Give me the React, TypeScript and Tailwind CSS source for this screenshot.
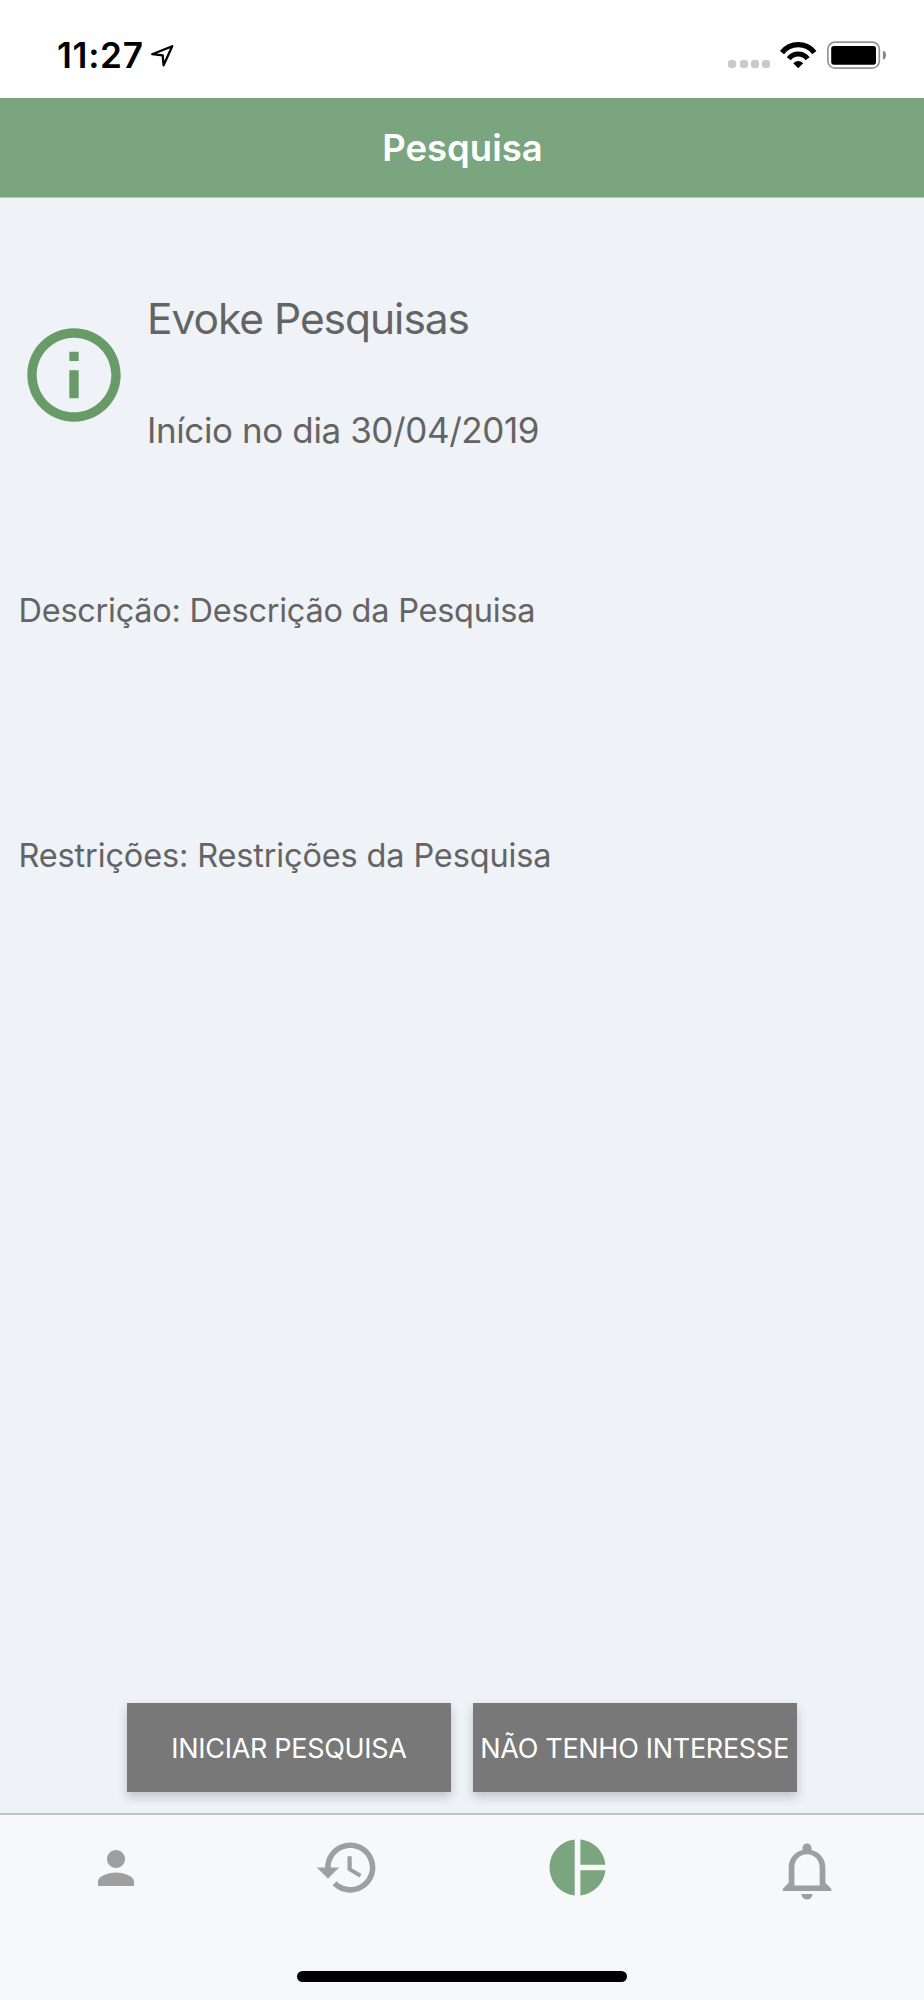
import React from "react";

function LocationArrow() {
  return (
    <svg className="ml-[6px] mt-[43px] h-[26px] w-[25px]" viewBox="0 0 25 26" fill="none">
      <path d="M2.2 11.2 22.2 3.2 13.6 22.3 12.7 12.3Z" stroke="#000" strokeWidth="2.3" strokeLinejoin="round" />
    </svg>
  );
}

function Wifi() {
  return (
    <svg className="h-[28px] w-[38px]" viewBox="779 41 38 28" fill="none">
      <path d="M782 52.6A20.6 20.6 0 0 1 814.4 52.6" stroke="#000" strokeWidth="5.2" />
      <path d="M788.8 58.7A11.6 11.6 0 0 1 807.6 58.7" stroke="#000" strokeWidth="5" />
      <path d="M793.2 63.2Q798.2 59 803.2 63.2L798.2 68.2Z" fill="#000" />
    </svg>
  );
}

function Battery() {
  return (
    <svg className="h-[28px] w-[60px]" viewBox="827 41 60 28" fill="none">
      <rect x="827.9" y="42.1" width="51.4" height="26" rx="7.2" stroke="#949494" strokeWidth="1.7" />
      <rect x="831.2" y="46" width="44.8" height="18.7" rx="2.6" fill="#000" />
      <path d="M882.9 50.6Q886 51.8 886 55.1 886 58.5 882.9 59.8Z" fill="#858585" />
    </svg>
  );
}

function StatusBar() {
  return (
    <div className="flex h-[98px] bg-white pl-[57px] text-black">
      <span className="mt-[35px] w-[87px] whitespace-nowrap text-[35.2px] font-semibold leading-[41px] tracking-[0.7px]">11:27</span>
      <LocationArrow />
      <div className="ml-auto mr-[37px] mt-[41px] flex h-[28px] gap-[10px]">
        <div className="-mr-[1px] mt-[19px] flex gap-[3.2px]">
          <i className="h-[8px] w-[8px] rounded-[3px] bg-[#c9c9c9]" />
          <i className="h-[8px] w-[8px] rounded-[3px] bg-[#c9c9c9]" />
          <i className="h-[8px] w-[8px] rounded-[3px] bg-[#c9c9c9]" />
          <i className="h-[8px] w-[8px] rounded-[3px] bg-[#c9c9c9]" />
        </div>
        <Wifi />
        <Battery />
      </div>
    </div>
  );
}

function InfoIcon() {
  return (
    <svg className="ml-[17.7px] mt-[121px] h-[112px] w-[112px] shrink-0" viewBox="0 0 24 24" fill="#689b68">
      <path d="M11 7h2v2h-2zm0 4h2v6h-2zm1-9C6.48 2 2 6.48 2 12s4.48 10 10 10 10-4.48 10-10S17.52 2 12 2zm0 18c-4.41 0-8-3.59-8-8s3.59-8 8-8 8 3.59 8 8-3.59 8-8 8z" />
    </svg>
  );
}

function TabBar() {
  return (
    <nav className="flex h-[187px] flex-col border-t-2 border-[#c0c3c8] bg-[#f6f8fa]">
      <div className="flex h-[156px]">
        <button className="flex w-1/4 items-start justify-center pt-[26px]">
          <svg className="h-[54px] w-[54px]" viewBox="0 0 24 24" fill="#9f9f9f">
            <path d="M12 12c2.21 0 4-1.79 4-4s-1.79-4-4-4-4 1.79-4 4 1.79 4 4 4zm0 2c-2.67 0-8 1.34-8 4v2h16v-2c0-2.66-5.33-4-8-4z" />
          </svg>
        </button>
        <button className="flex w-1/4 items-start justify-center pl-[2px] pt-[19px]">
          <svg className="h-[67px] w-[67px]" viewBox="0 0 24 24" fill="#9f9f9f">
            <path d="M13 3c-4.97 0-9 4.03-9 9H1l3.89 3.89.07.14L9 12H6c0-3.87 3.13-7 7-7s7 3.13 7 7-3.13 7-7 7c-1.93 0-3.68-.79-4.94-2.06l-1.42 1.42C8.27 19.99 10.51 21 13 21c4.97 0 9-4.03 9-9s-4.03-9-9-9zm-1 5v5l4.28 2.54.72-1.21-3.5-2.08V8H12z" />
          </svg>
        </button>
        <button className="flex w-1/4 items-start justify-center pt-[19px]">
          <svg className="h-[67px] w-[67px]" viewBox="0 0 24 24" fill="#7aa57e">
            <path d="M11 2v20c-5.07-.5-9-4.79-9-10s3.93-9.5 9-10zm2.03 0v8.99H22c-.47-4.74-4.24-8.52-8.97-8.99zm0 11.01V22c4.74-.47 8.5-4.25 8.97-8.99h-8.97z" />
          </svg>
        </button>
        <button className="flex w-1/4 items-start justify-center pr-[3px] pt-[25px]">
          <svg className="h-[62px] w-[50px]" viewBox="782.6 1840 50 62" fill="#9f9f9f">
            <path
              fillRule="evenodd"
              d="M803.1 1850V1848a4.5 4.5 0 0 1 9 0V1850C820 1852 826 1858.500 826 1867.500V1882.700L831.800 1888.700V1891H783.500V1888.700L789.300 1882.700V1867.500C789.300 1858.500 795.200 1852 803.1 1850ZM807.600 1854.300C800.500 1854.300 795 1860 795 1867.500V1885.600H820.300V1867.500C820.300 1860 814.700 1854.300 807.600 1854.300Z"
            />
            <path d="M802 1894H813.200A5.600 5.500 0 0 1 802 1894Z" />
          </svg>
        </button>
      </div>
      <div className="mx-auto h-[11px] w-[330px] rounded-full bg-black" />
    </nav>
  );
}

export default function App() {
  return (
    <div className="flex h-[2000px] w-[924px] flex-col overflow-hidden bg-[#eff3f8] font-['Inter',sans-serif] text-[#646464]">
      <StatusBar />
      <header className="flex h-[100px] items-center justify-center border-b border-[#b9c1c3] bg-[#7aa57e] pl-[1px] pt-[2px] text-[36.5px] font-semibold text-white">
        Pesquisa
      </header>
      <main className="flex flex-1 flex-col">
        <section className="flex h-[363px]">
          <InfoIcon />
          <div className="ml-[17.3px] whitespace-nowrap">
            <h1 className="mt-[96px] text-[42.5px] leading-[50px] tracking-[-1.03px]">Evoke Pesquisas</h1>
            <p className="mt-[66px] text-[35px] leading-[40px] tracking-[-0.4px]">Início no dia 30/04/2019</p>
          </div>
        </section>
        <p className="mt-[30px] pl-[18.5px] text-[32.5px] leading-[40px] tracking-[-0.25px]">Descrição: Descrição da Pesquisa</p>
        <p className="mt-[205px] pl-[18.5px] text-[32.5px] leading-[40px] tracking-[-0.15px]">Restrições: Restrições da Pesquisa</p>
        <div className="mb-[21px] mt-auto flex justify-center gap-[22px]">
          <button className="h-[89px] w-[324px] whitespace-nowrap bg-[#787878] pt-[4px] text-[27px] tracking-[-0.3px] text-white shadow-[0_5px_10px_rgba(0,0,0,0.2)]">INICIAR PESQUISA</button>
          <button className="h-[89px] w-[324px] whitespace-nowrap bg-[#787878] pr-[1px] pt-[4px] text-[27px] tracking-[-0.3px] text-white shadow-[0_5px_10px_rgba(0,0,0,0.2)]">NÃO TENHO INTERESSE</button>
        </div>
      </main>
      <TabBar />
    </div>
  );
}
